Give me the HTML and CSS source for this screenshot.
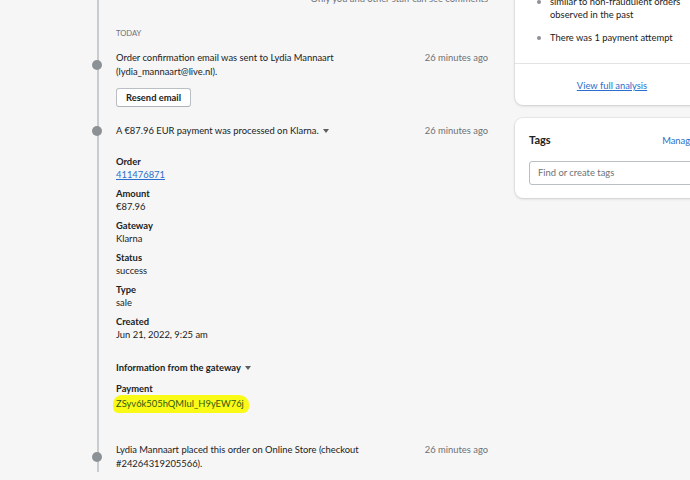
FILE: index.html
```html
<!DOCTYPE html>
<html lang="en">
<head>
<meta charset="utf-8">
<title>Order timeline</title>
<link rel="stylesheet" href="styles.css">
</head>
<body>
<div class="page">
  <main class="main">
    <div class="timeline">
      <p class="comments">Only you and other staff can see comments</p>
      <p class="day">Today</p>

      <section class="event">
        <div class="event-head">
          <span class="dot"></span>
          <p class="event-text">Order confirmation email was sent to Lydia Mannaart<br>(lydia_mannaart@live.nl).</p>
          <span class="time">26 minutes ago</span>
        </div>
        <button class="btn" type="button">Resend email</button>
      </section>

      <section class="event event-payment">
        <div class="event-head">
          <span class="dot"></span>
          <p class="event-text">A €87.96 EUR payment was processed on Klarna. <span class="caret"></span></p>
          <span class="time">26 minutes ago</span>
        </div>
        <dl class="details">
          <div class="pair"><dt>Order</dt><dd><a href="#" class="link">411476871</a></dd></div>
          <div class="pair"><dt>Amount</dt><dd>€87.96</dd></div>
          <div class="pair"><dt>Gateway</dt><dd>Klarna</dd></div>
          <div class="pair"><dt>Status</dt><dd>success</dd></div>
          <div class="pair"><dt>Type</dt><dd>sale</dd></div>
          <div class="pair"><dt>Created</dt><dd>Jun 21, 2022, 9:25 am</dd></div>
        </dl>
        <p class="gateway-title">Information from the gateway <span class="caret"></span></p>
        <dl class="details details-gw">
          <div class="pair"><dt>Payment</dt><dd><span class="highlight">ZSyv6k505hQMIul_H9yEW76j</span></dd></div>
        </dl>
      </section>

      <section class="event event-last">
        <div class="event-head">
          <span class="dot"></span>
          <p class="event-text">Lydia Mannaart placed this order on Online Store (checkout<br>#24264319205566).</p>
          <span class="time">26 minutes ago</span>
        </div>
      </section>
    </div>
  </main>

  <aside class="side">
    <div class="card card-risk">
      <ul class="bullets">
        <li>similar to non-fraudulent orders<br>observed in the past</li>
        <li>There was 1 payment attempt</li>
      </ul>
      <div class="card-foot"><a href="#" class="link">View full analysis</a></div>
    </div>

    <div class="card card-tags">
      <div class="tags-head">
        <h2 class="tags-title">Tags</h2>
        <a href="#" class="manage">Manage</a>
      </div>
      <div class="input">Find or create tags</div>
    </div>
  </aside>
</div>
</body>
</html>
```

FILE: styles.css
```css
* { box-sizing: border-box; }
html, body { margin: 0; padding: 0; }
body {
  background: #f6f6f7;
  font-family: "Lato", "Liberation Sans", sans-serif;
  font-size: 9.4px;
  color: #202223;
  width: 690px;
  height: 480px;
  overflow: hidden;
}
p, dl, dd, dt, ul, h2 { margin: 0; padding: 0; }

.page { display: flex; align-items: stretch; height: 480px; }
.main { width: 515px; flex: none; padding-left: 97px; }
.timeline {
  height: 100%;
  border-left: 2px solid #c9cccf;
  padding: 0 27px 0 17px;
}

.comments {
  text-align: right;
  color: #6d7175;
  line-height: 14px;
  margin-top: -8px;
}
.day {
  margin-top: 20px;
  text-transform: uppercase;
  font-size: 7.6px;
  line-height: 14px;
  color: #6d7175;
}

.event { margin-top: 11px; }
.event-head {
  position: relative;
  display: flex;
  justify-content: space-between;
  align-items: flex-start;
}
.event-text { line-height: 14px; }
.time { color: #6d7175; line-height: 14px; white-space: nowrap; }
.dot {
  position: absolute;
  left: -24px;
  top: 50%;
  margin-top: -5px;
  width: 10px;
  height: 10px;
  border-radius: 50%;
  background: #8c9196;
}

.btn {
  margin-top: 9px;
  height: 19px;
  padding: 0 9px;
  font: inherit;
  font-weight: 700;
  color: #202223;
  background: #fff;
  border: 1px solid #babfc3;
  border-bottom-color: #aeb4b9;
  border-radius: 3px;
  line-height: 17px;
}

.caret {
  display: inline-block;
  width: 0; height: 0;
  border-left: 3px solid transparent;
  border-right: 3px solid transparent;
  border-top: 4px solid #5c5f62;
  vertical-align: middle;
  margin-left: 2px;
  margin-top: -2px;
}

.event-payment { margin-top: 17px; }
.details { margin-top: 17px; display: flex; flex-direction: column; gap: 6px; }
.pair dt { font-weight: 700; line-height: 13px; }
.pair dd { line-height: 13px; }
.link { color: #2c6ecb; text-decoration: underline; }

.gateway-title { margin-top: 20px; font-weight: 700; line-height: 13px; }
.details-gw { margin-top: 8px; }
.highlight {
  display: inline-block;
  background: #fafa17;
  color: #2f5a12;
  padding: 2px 5px 3px 3px;
  margin-left: -3px;
  border-radius: 8px 10px 6px 5px / 9px 9px 6px 6px;
}

.event-last { margin-top: 30px; }

.side { width: 194px; flex: none; }
.card {
  background: #fff;
  border-radius: 8px;
  box-shadow: 0 0 0 1px rgba(63,63,68,0.06), 0 1px 3px rgba(63,63,68,0.18);
}
.card-risk { margin-top: -5px; border-radius: 0 0 8px 8px; }
.bullets {
  list-style: none;
  padding: 0 14px 19px 35px;
  display: flex;
  flex-direction: column;
  gap: 10px;
  border-bottom: 1px solid #e1e3e5;
}
.bullets li { position: relative; line-height: 13px; white-space: nowrap; }
.bullets li::before {
  content: "";
  position: absolute;
  left: -13px;
  top: 5px;
  width: 4px;
  height: 4px;
  border-radius: 50%;
  background: #8c9196;
}
.card-foot {
  padding: 15px 0 13px 0;
  text-align: center;
  line-height: 13px;
}
.card-tags { margin-top: 13px; padding: 14px 14px 13px 14px; }
.tags-head { display: flex; justify-content: space-between; align-items: center; height: 16px; }
.tags-title { font-size: 11px; font-weight: 700; line-height: 16px; }
.manage { color: #2c6ecb; text-decoration: none; }
.input {
  margin-top: 13px;
  height: 24px;
  border: 1px solid #babfc3;
  border-radius: 3px;
  padding: 0 8px;
  line-height: 22px;
  color: #6d7175;
}
```
